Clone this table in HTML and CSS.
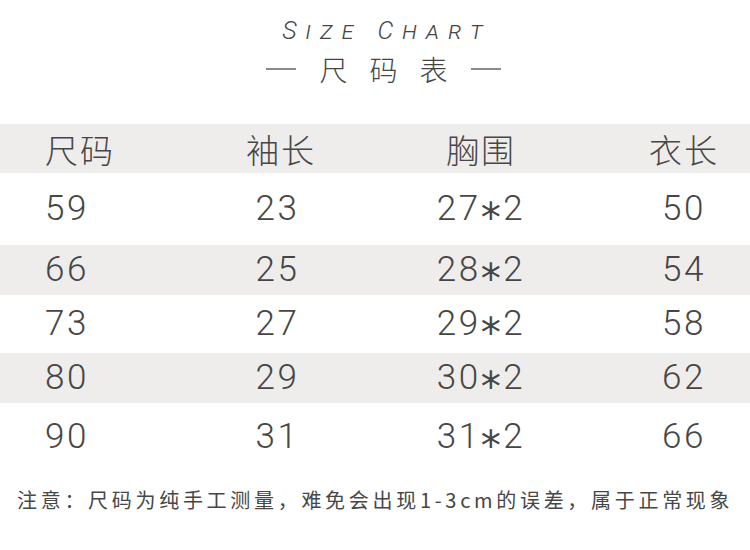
FILE: index.html
```html
<!DOCTYPE html>
<html lang="zh-CN">
<head>
<meta charset="utf-8">
<title>Size Chart</title>
<link rel="stylesheet" href="styles.css">
</head>
<body>
<div class="page">
  <header class="head">
    <div class="title">Size Chart</div>
    <div class="subtitle"><span class="dash"></span><span class="sub-text">尺码表</span><span class="dash"></span></div>
  </header>
  <div class="table">
    <div class="row row-head band">
      <div class="cell c1">尺码</div>
      <div class="cell c2">袖长</div>
      <div class="cell c3">胸围</div>
      <div class="cell c4">衣长</div>
    </div>
    <div class="row r1">
      <div class="cell c1 num">59</div>
      <div class="cell c2 num">23</div>
      <div class="cell c3 num">27<span class="ast">*</span>2</div>
      <div class="cell c4 num">50</div>
    </div>
    <div class="row r2 band">
      <div class="cell c1 num">66</div>
      <div class="cell c2 num">25</div>
      <div class="cell c3 num">28<span class="ast">*</span>2</div>
      <div class="cell c4 num">54</div>
    </div>
    <div class="row r3">
      <div class="cell c1 num">73</div>
      <div class="cell c2 num">27</div>
      <div class="cell c3 num">29<span class="ast">*</span>2</div>
      <div class="cell c4 num">58</div>
    </div>
    <div class="row r4 band">
      <div class="cell c1 num">80</div>
      <div class="cell c2 num">29</div>
      <div class="cell c3 num">30<span class="ast">*</span>2</div>
      <div class="cell c4 num">62</div>
    </div>
    <div class="row r5">
      <div class="cell c1 num">90</div>
      <div class="cell c2 num">31</div>
      <div class="cell c3 num">31<span class="ast">*</span>2</div>
      <div class="cell c4 num">66</div>
    </div>
  </div>
  <p class="note">注意：尺码为纯手工测量，难免会出现1-3cm的误差，属于正常现象</p>
</div>
</body>
</html>
```
FILE: styles.css
```css
html, body {
  margin: 0;
  padding: 0;
  background: #ffffff;
}

.page {
  width: 750px;
  height: 550px;
  overflow: hidden;
  color: #464646;
  font-family: "Noto Sans CJK SC", "Noto Sans", sans-serif;
}

.head {
  display: flex;
  flex-direction: column;
  align-items: center;
  padding: 16px 0 0 17px;
  height: 124px;
  box-sizing: border-box;
}

.title {
  font-family: Roboto, "DejaVu Sans", sans-serif;
  font-style: italic;
  font-weight: 300;
  font-variant: small-caps;
  font-size: 25px;
  line-height: 30px;
  letter-spacing: 9px;
  color: #454545;
  padding-left: 7px;
}

.subtitle {
  display: flex;
  align-items: center;
  margin-top: 6px;
  height: 34px;
}

.dash {
  width: 30px;
  height: 2px;
  background: #8a8a8a;
}

.sub-text {
  font-size: 28px;
  line-height: 34px;
  letter-spacing: 22px;
  margin-left: 23px;
  margin-right: 1px;
  font-weight: 300;
  color: #444;
}

.table {
  display: flex;
  flex-direction: column;
}

.row {
  display: grid;
  grid-template-columns: 200px 160px 242px 148px;
  align-items: center;
}

.band {
  background: #efedeb;
}

.row-head { height: 49px; }
.r1 { height: 72px; }
.r2 { height: 50px; }
.r3 { height: 58px; }
.r4 { height: 50px; }
.r5 { height: 67px; }

.cell {
  text-align: center;
  white-space: nowrap;
}

.c1 {
  text-align: left;
  padding-left: 45px;
}

.c4 {
  padding-left: 16px;
}

.row-head .cell {
  font-size: 33px;
  line-height: 40px;
  letter-spacing: 2px;
  font-weight: 300;
}

.row-head .c2 { padding-left: 2px; }

.num {
  font-family: Roboto, "DejaVu Sans", sans-serif;
  font-weight: 300;
  font-size: 35px;
  line-height: 40px;
  letter-spacing: 2.5px;
}

.c2.num { padding-right: 5px; }

.ast {
  font-family: "DejaVu Sans", sans-serif;
  font-weight: 400;
  font-size: 1.15em;
  line-height: 0;
  vertical-align: -0.3em;
}

.note {
  margin: 18px 0 0 17px;
  font-size: 20px;
  line-height: 24px;
  letter-spacing: 3.7px;
  white-space: nowrap;
  color: #474747;
}
```
